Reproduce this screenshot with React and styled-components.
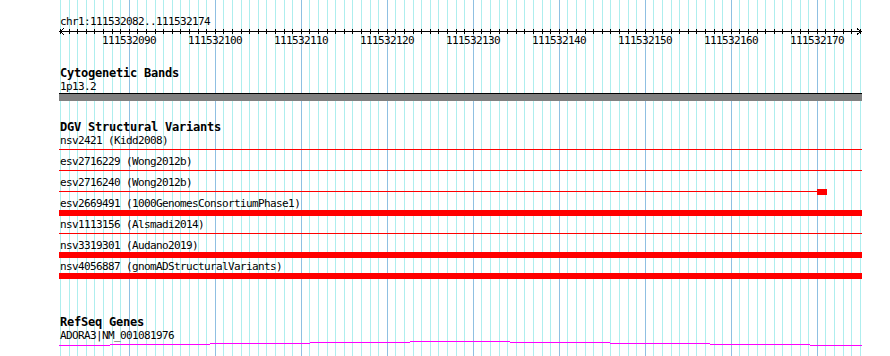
import React from 'react';
import styled, { createGlobalStyle } from 'styled-components';

const START = 111532082;
const END = 111532175;
const PX_PER_BP = 8.6;
const ORIGIN = 1.5; // x of first base inside the panel
const PANEL_WIDTH = 803;

const bpX = bp => Math.floor(ORIGIN + (bp - START) * PX_PER_BP);

const bases = [];
for (let bp = START; bp <= END; bp++) bases.push(bp);
const majors = bases.filter(bp => bp % 10 === 0);

const variants = [
	{ id: 'nsv2421', source: 'Kidd2008', kind: 'line' },
	{ id: 'esv2716229', source: 'Wong2012b', kind: 'line' },
	{ id: 'esv2716240', source: 'Wong2012b', kind: 'line', end: 768, box: 10 },
	{ id: 'esv2669491', source: '1000GenomesConsortiumPhase1', kind: 'bar' },
	{ id: 'nsv1113156', source: 'Alsmadi2014', kind: 'line' },
	{ id: 'nsv3319301', source: 'Audano2019', kind: 'bar' },
	{ id: 'nsv4056887', source: 'gnomADStructuralVariants', kind: 'bar' },
];

// gene drawn as a shallow arc, one pixel step per segment
const geneSegments = [
	[0, 51, 4],
	[51, 151, 3],
	[151, 251, 2],
	[251, 351, 1],
	[351, 451, 0],
	[451, 551, 1],
	[551, 651, 2],
	[651, 751, 3],
	[751, 803, 4],
];

const GlobalStyle = createGlobalStyle`
	html, body {
		margin: 0;
		padding: 0;
		background: #ffffff;
	}
`;

const App = () => {
	return (
		<>
			<GlobalStyle />
			<Page>
				<Panel>
					<GridLayer width={PANEL_WIDTH} height="356">
						{bases.map(bp => (
							<line
								key={bp}
								x1={bpX(bp) + 0.5}
								x2={bpX(bp) + 0.5}
								y1="0"
								y2="356"
								stroke={bp % 10 === 0 ? '#8fc0e2' : '#aeeeee'}
								strokeWidth="1"
							/>
						))}
					</GridLayer>
					<Tracks>
						<Ruler>
							<ChromLabel>chr1:111532082..111532174</ChromLabel>
							<Axis width={PANEL_WIDTH} height="6">
								<line x1="1" x2="802" y1="3.5" y2="3.5" stroke="#000" />
								{bases.map(bp => (
									<line
										key={bp}
										x1={bpX(bp) + 0.5}
										x2={bpX(bp) + 0.5}
										y1="1"
										y2="6"
										stroke="#000"
									/>
								))}
								<polyline points="5,0.5 1,3.5 5,6.5" fill="none" stroke="#000" />
								<polyline points="798,0.5 802,3.5 798,6.5" fill="none" stroke="#000" />
							</Axis>
							<TickLabels>
								{majors.map(bp => (
									<TickLabel key={bp} style={{ left: bpX(bp) - 27 }}>
										{bp}
									</TickLabel>
								))}
							</TickLabels>
						</Ruler>

						<Track gap={20}>
							<TrackTitle>Cytogenetic Bands</TrackTitle>
							<FeatureLabel>1p13.2</FeatureLabel>
							<Band />
						</Track>

						<Track gap={20}>
							<TrackTitle>DGV Structural Variants</TrackTitle>
							{variants.map(v => (
								<Row key={v.id}>
									<FeatureLabel>
										{v.id} ({v.source})
									</FeatureLabel>
									<Glyph>
										{v.kind === 'bar' ? (
											<ThickBar />
										) : (
											<ThinLine style={v.end ? { width: v.end } : undefined} />
										)}
										{v.box && <EndBox style={{ left: v.end - v.box, width: v.box }} />}
									</Glyph>
								</Row>
							))}
						</Track>

						<Track gap={35}>
							<TrackTitle>RefSeq Genes</TrackTitle>
							<FeatureLabel>ADORA3|NM_001081976</FeatureLabel>
							<Gene width={PANEL_WIDTH} height="6">
								{geneSegments.map(([x1, x2, y]) => (
									<rect key={x1} x={x1} y={y} width={x2 - x1} height="1" fill="#ff00ff" />
								))}
							</Gene>
						</Track>
					</Tracks>
				</Panel>
			</Page>
		</>
	);
};

const Page = styled.div`
	width: 890px;
	height: 356px;
	overflow: hidden;
	display: flex;
`;

const Panel = styled.div`
	position: relative;
	margin-left: 59px;
	width: ${PANEL_WIDTH}px;
	height: 356px;
`;

const GridLayer = styled.svg`
	position: absolute;
	top: 0;
	left: 0;
	shape-rendering: crispEdges;
`;

const Tracks = styled.div`
	position: relative;
	display: flex;
	flex-direction: column;
	color: #000;
`;

const Ruler = styled.div`
	display: flex;
	flex-direction: column;
	padding-top: 15px;
`;

const monoText = `
	font-family: 'DejaVu Sans Mono', 'Liberation Mono', monospace;
	font-size: 11px;
	letter-spacing: -0.62px;
	white-space: nowrap;
`;

const ChromLabel = styled.div`
	${monoText}
	height: 13px;
	line-height: 13px;
	padding-left: 1px;
`;

const Axis = styled.svg`
	display: block;
	overflow: visible;
	shape-rendering: crispEdges;
`;

const TickLabels = styled.div`
	position: relative;
	height: 13px;
`;

const TickLabel = styled.span`
	${monoText}
	position: absolute;
	top: 0;
	line-height: 13px;
`;

const Track = styled.section`
	display: flex;
	flex-direction: column;
	margin-top: ${props => props.gap}px;
`;

const TrackTitle = styled.h3`
	margin: 0;
	font-family: 'DejaVu Sans Mono', 'Liberation Mono', monospace;
	font-weight: bold;
	font-size: 12px;
	letter-spacing: -0.22px;
	height: 13px;
	line-height: 13px;
	white-space: nowrap;
	padding-left: 1px;
`;

const FeatureLabel = styled.div`
	${monoText}
	height: 13px;
	line-height: 13px;
	padding-left: 1px;
`;

const Band = styled.div`
	height: 7px;
	border-top: 1px solid #000;
	background: #808080;
`;

const Row = styled.div`
	display: flex;
	flex-direction: column;
	height: 21px;
`;

const Glyph = styled.div`
	position: relative;
	height: 6px;
`;

const ThinLine = styled.div`
	margin-top: 2px;
	height: 1px;
	width: 100%;
	background: #ff0000;
`;

const ThickBar = styled.div`
	height: 6px;
	background: #ff0000;
`;

const EndBox = styled.div`
	position: absolute;
	top: 0;
	height: 6px;
	background: #ff0000;
`;

const Gene = styled.svg`
	display: block;
	margin-top: -1px;
	shape-rendering: crispEdges;
`;

export default App;
